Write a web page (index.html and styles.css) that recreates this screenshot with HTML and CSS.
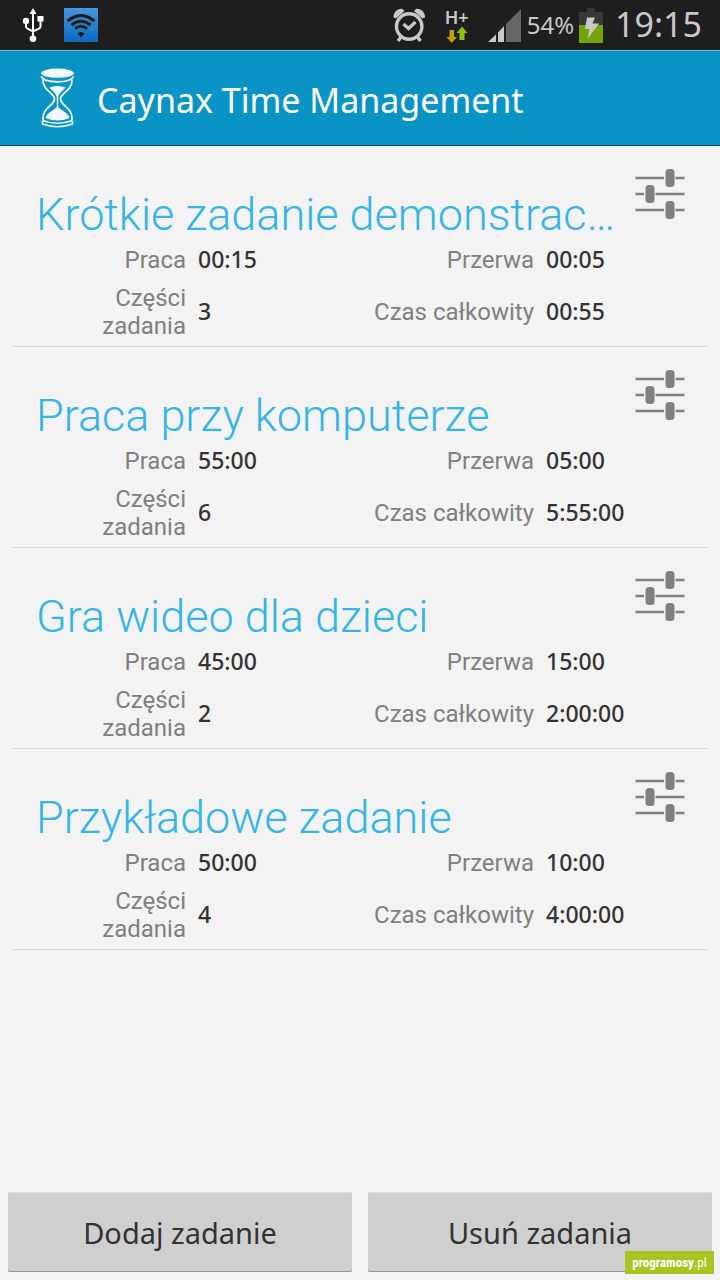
FILE: index.html
```html
<!DOCTYPE html>
<html lang="pl">
<head>
    <meta charset="UTF-8">
    <meta name="viewport" content="width=device-width, initial-scale=1.0">
    <title>Caynax Time Management</title>
    <link rel="stylesheet" href="styles.css">
</head>
<body>
    <!-- shared icon -->
    <svg class="sprite" aria-hidden="true">
        <symbol id="icon-sliders" viewBox="0 0 50 52">
            <path d="M0.5 10H29M40.500 10H49.500M0.500 26H9M20.500 26H49.500M0.500 42H29M40.500 42H49.500" stroke="#808080" stroke-width="2.600"/>
            <rect x="30.500" y="1" width="9" height="18" rx="3.500" fill="#808080"/>
            <rect x="10.500" y="17" width="9" height="18" rx="3.500" fill="#808080"/>
            <rect x="30.500" y="33" width="9" height="18" rx="3.500" fill="#808080"/>
        </symbol>
    </svg>

    <div class="status-bar">
        <svg class="icon-usb" width="22" height="36" viewBox="22 7 22 36" aria-hidden="true">
            <path d="M33 12V38M26 21V26.500Q26 28 27.500 28.700L33 31.500L39 28.700Q40.500 28 40.500 26.500V19" fill="none" stroke="#fff" stroke-width="2"/>
            <path d="M33 8L36.500 14H29.500Z" fill="#fff"/>
            <circle cx="26" cy="21" r="3.200" fill="#fff"/>
            <rect x="37.500" y="16" width="6" height="5.500" fill="#fff"/>
            <circle cx="33" cy="38.700" r="3.300" fill="#fff"/>
        </svg>
        <svg class="icon-wifi" width="34" height="34" viewBox="0 0 34 34" aria-hidden="true">
            <defs>
                <linearGradient id="wifi-bg" x1="0" y1="0" x2="0" y2="1">
                    <stop offset="0" stop-color="#4398df"/>
                    <stop offset="1" stop-color="#0b6abf"/>
                </linearGradient>
            </defs>
            <rect width="34" height="34" rx="1" fill="url(#wifi-bg)"/>
            <g fill="none" stroke="#1e1e1e" stroke-width="3">
                <path d="M3.500 13.200Q17 2 30.500 13.200"/>
                <path d="M7.500 17Q17 9.500 26.500 17"/>
                <path d="M11 20.600Q17 16 23 20.600"/>
            </g>
            <path d="M13.500 25.500Q17 22.500 20.500 25.500L17 29.500Z" fill="#1e1e1e"/>
        </svg>

        <div class="status-right">
            <svg class="icon-alarm" width="34" height="36" viewBox="392 7 34 36" aria-hidden="true">
                <g fill="none" stroke="#c8c8c8">
                    <circle cx="409.200" cy="26.500" r="12.700" stroke-width="3.400"/>
                    <path d="M403.500 24L408.500 28.500L415.500 22" stroke-width="3.200"/>
                    <path d="M401 37L398 41M417.500 37L420.500 41" stroke-width="3.400"/>
                </g>
                <path d="M393.500 17.500C393 12.500 398 8 402.500 9L404.500 11L396 18.500ZM425 17.500C425.500 12.500 420.500 8 416 9L414 11L422.500 18.500Z" fill="#c8c8c8"/>
            </svg>
            <div class="network">
                <span>H+</span>
                <svg width="22" height="17" viewBox="447 26 22 17" aria-hidden="true">
                    <path d="M450.500 30H455V37H458L452.700 43L447.500 37H450.500Z" fill="#c89b0c"/>
                    <path d="M460.500 40V33H457.500L463 26.500L468.500 33H465.500V40Z" fill="#8cc00c"/>
                </svg>
            </div>
            <svg class="icon-signal" width="34" height="34" viewBox="488 9 34 34" aria-hidden="true">
                <path d="M488 43L496 35.500V43ZM498 43V33.500L504 27V43Z" fill="#c8c8c8"/>
                <path d="M506 43V25L521 10V43Z" fill="#666"/>
            </svg>
            <span class="battery-level">54%</span>
            <svg class="icon-battery" width="24" height="35" viewBox="579 8 24 35" aria-hidden="true">
                <path d="M579 12H587V8H595V12H603V25H579Z" fill="#383838"/>
                <rect x="579" y="25" width="24" height="18" fill="#74a30b"/>
                <path d="M587 17.500H595L592.500 23.500H599L587.500 39L589.500 29H585Z" fill="#c8c8c8"/>
            </svg>
            <time class="clock">19:15</time>
        </div>
    </div>

    <header class="app-bar">
        <svg class="logo" width="34" height="60" viewBox="40 68 34 60" aria-hidden="true">
            <g fill="none" stroke="#f2f9fc" stroke-width="1.700">
                <path d="M41 76.500Q44 81.800 57.500 81.800T73.500 76.500"/>
                <path d="M43 79.500C42.500 89 51 91.500 54 97Q55 99 54 101C51 107 42 109 43 120"/>
                <path d="M72 79.500C72.500 89 64 91.500 61 97Q60 99 61 101C64 107 73 109 72 120"/>
                <path d="M42.500 120.500Q57.500 126 72.500 120.500M42.500 121V124Q57.500 129.500 72.500 124V121"/>
            </g>
            <ellipse cx="57.500" cy="73.200" rx="16.300" ry="4.600" fill="#f2f9fc"/>
            <path d="M49.500 87.500Q57.500 84.500 65.500 87.500C62 91.500 58.500 93.500 58.200 98V107C60 110 68 112 69.500 118Q57.500 123 45.500 118C47 112 55 110 56.800 107V98C56.500 93.500 53 91.500 49.500 87.500Z" fill="#f2f9fc"/>
        </svg>
        <h1>Caynax Time Management</h1>
    </header>

    <main class="task-list">
        <article class="task">
            <div class="task-header">
                <h2>Krótkie zadanie demonstrac…</h2>
                <button class="settings-btn" aria-label="Ustawienia"><svg width="50" height="52"><use href="#icon-sliders"/></svg></button>
            </div>
            <dl>
                <dt>Praca</dt><dd>00:15</dd>
                <dt>Przerwa</dt><dd>00:05</dd>
                <dt>Części zadania</dt><dd>3</dd>
                <dt>Czas całkowity</dt><dd>00:55</dd>
            </dl>
        </article>

        <article class="task">
            <div class="task-header">
                <h2>Praca przy komputerze</h2>
                <button class="settings-btn" aria-label="Ustawienia"><svg width="50" height="52"><use href="#icon-sliders"/></svg></button>
            </div>
            <dl>
                <dt>Praca</dt><dd>55:00</dd>
                <dt>Przerwa</dt><dd>05:00</dd>
                <dt>Części zadania</dt><dd>6</dd>
                <dt>Czas całkowity</dt><dd>5:55:00</dd>
            </dl>
        </article>

        <article class="task">
            <div class="task-header">
                <h2>Gra wideo dla dzieci</h2>
                <button class="settings-btn" aria-label="Ustawienia"><svg width="50" height="52"><use href="#icon-sliders"/></svg></button>
            </div>
            <dl>
                <dt>Praca</dt><dd>45:00</dd>
                <dt>Przerwa</dt><dd>15:00</dd>
                <dt>Części zadania</dt><dd>2</dd>
                <dt>Czas całkowity</dt><dd>2:00:00</dd>
            </dl>
        </article>

        <article class="task">
            <div class="task-header">
                <h2>Przykładowe zadanie</h2>
                <button class="settings-btn" aria-label="Ustawienia"><svg width="50" height="52"><use href="#icon-sliders"/></svg></button>
            </div>
            <dl>
                <dt>Praca</dt><dd>50:00</dd>
                <dt>Przerwa</dt><dd>10:00</dd>
                <dt>Części zadania</dt><dd>4</dd>
                <dt>Czas całkowity</dt><dd>4:00:00</dd>
            </dl>
        </article>
    </main>

    <footer class="actions">
        <button class="action-btn">Dodaj zadanie</button>
        <button class="action-btn">Usuń zadania</button>
        <div class="watermark"><b>programosy</b>.pl</div>
    </footer>
</body>
</html>
```
FILE: styles.css
```css
* {
    box-sizing: border-box;
}
body {
    margin: 0;
    min-height: 100vh;
    display: flex;
    flex-direction: column;
    background-color: #f3f3f3;
    color: #333;
    font-family: "Noto Sans", sans-serif;
}
svg {
    display: block;
    flex-shrink: 0;
}
.sprite {
    position: absolute;
    width: 0;
    height: 0;
}

/* status bar */
.status-bar {
    display: flex;
    align-items: center;
    height: 50px;
    padding: 0 18px 0 22px;
    background-color: #1e1e1e;
    color: #c8c8c8;
}
.icon-wifi {
    margin-left: 20px;
}
.status-right {
    display: flex;
    align-items: center;
    margin-left: auto;
}
.network {
    display: flex;
    flex-direction: column;
    align-items: center;
    width: 26px;
    margin: 0 18px 0 18px;
    font-size: 18px;
    font-weight: 600;
    line-height: 18px;
}
.battery-level {
    margin: 0 5px;
    font-size: 24px;
    line-height: 32px;
}
.clock {
    margin-left: 12px;
    padding-bottom: 2px;
    font-size: 34px;
    line-height: 48px;
}

/* app bar */
.app-bar {
    display: flex;
    align-items: center;
    height: 96px;
    padding: 0 40px;
    background-color: #0a94c6;
    border-top: 1px solid #6fc3df;
    border-bottom: 1px solid #064a66;
    color: #fff;
}
.app-bar h1 {
    margin: 0 0 0 23px;
    padding-top: 3px;
    font-size: 34px;
    font-weight: 400;
    line-height: 48px;
}

/* tasks */
.task-list {
    flex: 1;
    padding: 0 12px;
}
.task {
    padding-bottom: 6px;
    border-bottom: 1px solid #d8d8d8;
}
.task-header {
    display: flex;
    align-items: flex-end;
    justify-content: space-between;
    gap: 16px;
    height: 100px;
    padding: 22px 23px 5px 24px;
}
.task-header h2 {
    margin: 0;
    overflow: hidden;
    white-space: nowrap;
    text-overflow: ellipsis;
    color: #33b5e5;
    font-family: Roboto, sans-serif;
    font-size: 45px;
    font-weight: 300;
    line-height: 52px;
}
.settings-btn {
    align-self: flex-start;
    padding: 0;
    border: none;
    background: none;
    cursor: pointer;
}
.task dl {
    display: grid;
    grid-template-columns: repeat(4, 1fr);
    row-gap: 10px;
    align-items: center;
    margin: 0;
    line-height: 28px;
}
.task dt {
    color: #808080;
    font-family: Roboto, sans-serif;
    font-size: 24px;
    text-align: right;
}
.task dt:nth-of-type(odd) {
    padding-left: 24px;
}
.task dd {
    margin: 0;
    padding: 0 0 2px 12px;
    font-size: 23px;
    font-weight: 500;
    line-height: 26px;
}

/* bottom buttons */
.actions {
    position: relative;
    display: flex;
    gap: 16px;
    padding: 8px;
}
.action-btn {
    flex: 1;
    height: 80px;
    border: none;
    border-radius: 2px;
    background-color: #cfcfcf;
    box-shadow: inset 0 1px #dcdcdc, inset 0 -1px #999;
    color: #333;
    font-family: inherit;
    font-size: 29px;
    cursor: pointer;
}
.watermark {
    position: absolute;
    right: 6px;
    bottom: 6px;
    width: 89px;
    background-color: #aac423;
    color: #fff;
    font-family: "Roboto Condensed", Roboto, sans-serif;
    font-size: 13px;
    line-height: 23px;
    text-align: center;
}
```
